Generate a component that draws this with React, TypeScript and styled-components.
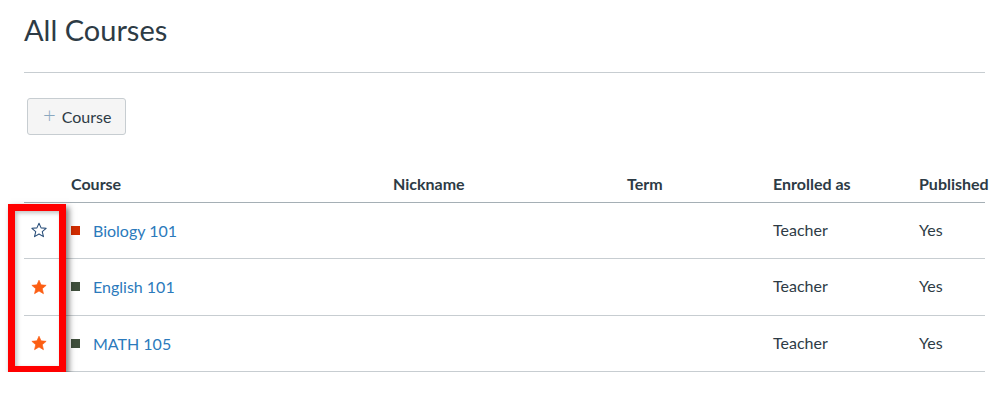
import React from "react";
import styled, { createGlobalStyle } from "styled-components";

const Global = createGlobalStyle`
  html, body { margin: 0; padding: 0; background: #ffffff; }
  body { font-family: Lato, "Noto Sans", "Liberation Sans", sans-serif; color: #2d3b45; }
`;

const Page = styled.div`
  position: relative;
  width: 961px;
  padding: 13px 0 0 24px;
`;

const Title = styled.h1`
  margin: 0;
  font-size: 29px;
  line-height: 1.2;
  font-weight: 400;
  color: #2d3b45;
`;

const Divider = styled.hr`
  margin: 24px 0 0;
  border: 0;
  border-top: 1px solid #c7cdd1;
  height: 0;
`;

const Toolbar = styled.div`
  display: flex;
  padding: 25px 0 0 3px;
`;

const AddButton = styled.button`
  display: flex;
  align-items: center;
  gap: 6px;
  height: 37px;
  padding: 0 14px 0 15px;
  background: #f5f5f5;
  border: 1px solid #c7cdd1;
  border-radius: 3px;
  font-family: Lato, "Noto Sans", sans-serif;
  font-size: 16px;
  color: #2d3b45;
`;

const Plus = styled.span`
  color: #8aa8bf;
  font-size: 22px;
  font-weight: 300;
  line-height: 1;
  margin-top: -3px;
`;

const Table = styled.div`
  margin-top: 30px;
`;

const Row = styled.div<{ $head?: boolean; $tall?: boolean }>`
  display: grid;
  grid-template-columns: 39px 322px 234px 146px 146px 74px;
  align-items: center;
  height: ${(p) => (p.$head ? "37px" : p.$tall ? "56px" : "55px")};
  border-bottom: 1px solid ${(p) => (p.$head ? "#a5afb5" : "#c7cdd1")};
  font-size: 16px;
  font-weight: ${(p) => (p.$head ? 700 : 400)};
  color: #2d3b45;
`;

const Cell = styled.div`
  padding-left: 8px;
  white-space: nowrap;
`;

const BodyCell = styled.div`
  padding-left: 8px;
  white-space: nowrap;
  margin-top: -2px;
`;

const StarCell = styled.div`
  padding-left: 7px;
  display: flex;
  align-items: center;
`;

const CourseCell = styled.div`
  padding-left: 8px;
  display: flex;
  align-items: center;
  gap: 13px;
`;

const Swatch = styled.span<{ $color: string }>`
  width: 9px;
  height: 9px;
  background: ${(p) => p.$color};
  flex: none;
`;

const CourseLink = styled.a`
  color: #2b7abc;
  text-decoration: none;
  font-size: 16px;
`;

const Highlight = styled.div`
  position: absolute;
  left: 8px;
  top: 204px;
  width: 44px;
  height: 155px;
  border: 7px solid #ff0000;
  box-shadow: 3px 3px 6px rgba(0, 0, 0, 0.5), inset 2px 2px 4px rgba(0, 0, 0, 0.25);
  pointer-events: none;
`;

const Star = ({ filled }: { filled: boolean }) => (
  <svg width="16" height="16" viewBox="0 0 24 24">
    <path
      d="M12 1.8l3.1 7 7.6.7-5.8 5 1.8 7.5L12 18l-6.7 4 1.8-7.5-5.8-5 7.6-.7z"
      fill={filled ? "#fc5e13" : "none"}
      stroke={filled ? "#fc5e13" : "#2a4f7a"}
      strokeWidth={filled ? 1 : 1.6}
      strokeLinejoin="round"
    />
  </svg>
);

const courses = [
  { name: "Biology 101", color: "#d12c00", fav: false, tall: false },
  { name: "English 101", color: "#3f4f3c", fav: true, tall: true },
  { name: "MATH 105", color: "#3f4f3c", fav: true, tall: false },
];

export default function App() {
  return (
    <>
      <Global />
      <Page>
        <Title>All Courses</Title>
        <Divider />
        <Toolbar>
          <AddButton>
            <Plus>+</Plus>
            Course
          </AddButton>
        </Toolbar>
        <Table>
          <Row $head>
            <Cell />
            <Cell>Course</Cell>
            <Cell>Nickname</Cell>
            <Cell>Term</Cell>
            <Cell>Enrolled as</Cell>
            <Cell>Published</Cell>
          </Row>
          {courses.map((c) => (
            <Row key={c.name} $tall={c.tall}>
              <StarCell>
                <Star filled={c.fav} />
              </StarCell>
              <CourseCell>
                <Swatch $color={c.color} />
                <CourseLink href="#">{c.name}</CourseLink>
              </CourseCell>
              <BodyCell />
              <BodyCell />
              <BodyCell>Teacher</BodyCell>
              <BodyCell>Yes</BodyCell>
            </Row>
          ))}
        </Table>
        <Highlight />
      </Page>
    </>
  );
}
